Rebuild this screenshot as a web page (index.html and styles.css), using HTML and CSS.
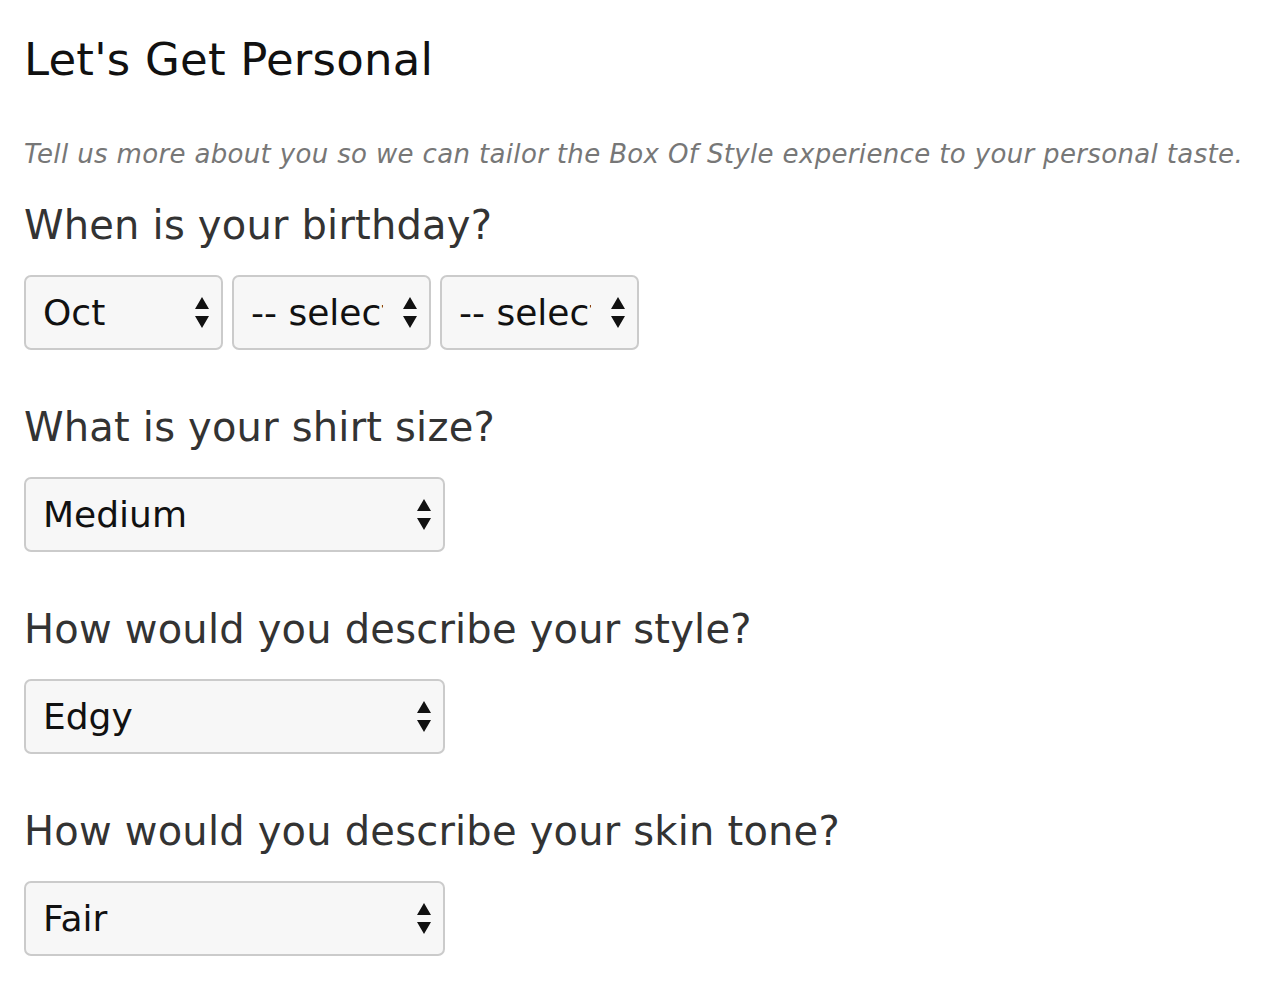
FILE: index.html
```html
<!DOCTYPE html>
<html>
<head>
<meta charset="utf-8">
<link rel="stylesheet" href="styles.css">
</head>
<body>
<div class="page">
  <h1 class="title">Let's Get Personal</h1>
  <p class="intro">Tell us more about you so we can tailor the Box Of Style experience to your personal taste.</p>

  <div class="field field-first">
    <div class="label">When is your birthday?</div>
    <div class="row">
      <div class="select small"><span class="val">Oct</span><svg class="arrows" viewBox="0 0 14 32" width="14" height="32"><path d="M7 0 L14 12 L0 12 Z M0 19 L14 19 L7 31 Z" fill="#111"/></svg></div>
      <div class="select small"><span class="val">-- select --</span><svg class="arrows" viewBox="0 0 14 32" width="14" height="32"><path d="M7 0 L14 12 L0 12 Z M0 19 L14 19 L7 31 Z" fill="#111"/></svg></div>
      <div class="select small"><span class="val">-- select --</span><svg class="arrows" viewBox="0 0 14 32" width="14" height="32"><path d="M7 0 L14 12 L0 12 Z M0 19 L14 19 L7 31 Z" fill="#111"/></svg></div>
    </div>
  </div>

  <div class="field">
    <div class="label">What is your shirt size?</div>
    <div class="select wide"><span class="val">Medium</span><svg class="arrows" viewBox="0 0 14 32" width="14" height="32"><path d="M7 0 L14 12 L0 12 Z M0 19 L14 19 L7 31 Z" fill="#111"/></svg></div>
  </div>

  <div class="field">
    <div class="label">How would you describe your style?</div>
    <div class="select wide"><span class="val">Edgy</span><svg class="arrows" viewBox="0 0 14 32" width="14" height="32"><path d="M7 0 L14 12 L0 12 Z M0 19 L14 19 L7 31 Z" fill="#111"/></svg></div>
  </div>

  <div class="field">
    <div class="label">How would you describe your skin tone?</div>
    <div class="select wide"><span class="val">Fair</span><svg class="arrows" viewBox="0 0 14 32" width="14" height="32"><path d="M7 0 L14 12 L0 12 Z M0 19 L14 19 L7 31 Z" fill="#111"/></svg></div>
  </div>
</div>
</body>
</html>
```

FILE: styles.css
```css
html, body {
  margin: 0;
  padding: 0;
  background: #fff;
}
body {
  font-family: "DejaVu Sans", "Lato", sans-serif;
  color: #333;
}
.page {
  padding: 25px 24px 0 24px;
}
.title {
  margin: 0;
  font-size: 45px;
  line-height: 70px;
  font-weight: 400;
  color: #111;
  letter-spacing: 0.2px;
}
.intro {
  margin: 44px 0 0 0;
  font-size: 26px;
  line-height: 30px;
  font-style: italic;
  color: #777;
  letter-spacing: 0.35px;
}
.field {
  margin-top: 52px;
}
.field-first {
  margin-top: 31px;
}
.label {
  font-size: 40px;
  line-height: 50px;
  color: #333;
  letter-spacing: 0.2px;
}
.row {
  display: flex;
  gap: 9px;
  margin-top: 25px;
}
.select {
  box-sizing: border-box;
  height: 75px;
  margin-top: 25px;
  border: 2px solid #cbcbcb;
  border-radius: 7px;
  background: #f7f7f7;
  display: flex;
  align-items: center;
  padding: 0 12px 0 17px;
  font-size: 36px;
  color: #111;
}
.row .select {
  margin-top: 0;
}
.select.small {
  width: 199px;
}
.select.wide {
  width: 421px;
}
.val {
  flex: 1;
  overflow: hidden;
  white-space: nowrap;
  margin-right: 20px;
  line-height: 44px;
}
.arrows {
  flex: none;
  display: block;
}
```
